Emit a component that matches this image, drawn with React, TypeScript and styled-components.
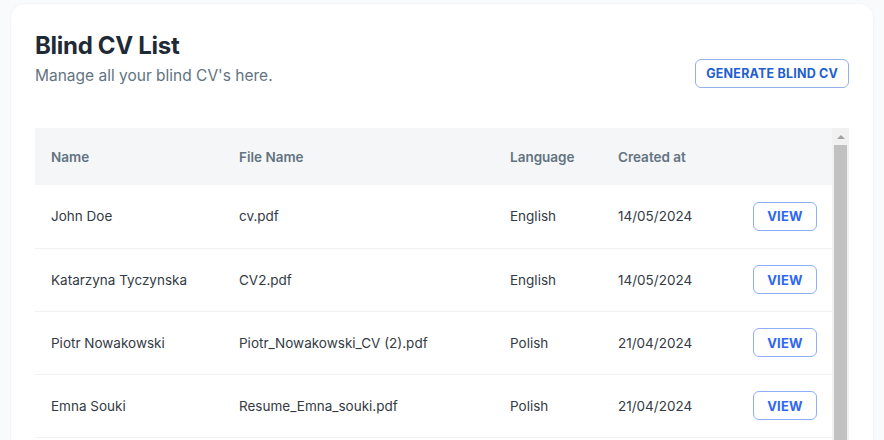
import React from "react";
import styled, { createGlobalStyle } from "styled-components";

const GlobalStyle = createGlobalStyle`
  * { box-sizing: border-box; }
  body {
    margin: 0;
    background: #f9fafb;
    font-family: "Inter", "Noto Sans", "Liberation Sans", sans-serif;
    color: #1f2a37;
  }
`;

const Page = styled.div`
  padding: 4px 11px 0;
`;

const Card = styled.section`
  background: #ffffff;
  border-radius: 14px;
  box-shadow: 0 0 2px rgba(145, 158, 171, 0.18);
  padding: 24px 24px 24px;
`;

const Header = styled.header`
  display: flex;
  justify-content: space-between;
  align-items: flex-end;
`;

const Title = styled.h1`
  margin: 0;
  font-size: 24px;
  line-height: 36px;
  font-weight: 700;
  color: #1f2a37;
  letter-spacing: -0.3px;
`;

const Subtitle = styled.p`
  margin: 0;
  font-size: 15.5px;
  line-height: 24px;
  color: #637381;
`;

const OutlineButton = styled.button<{ $tone?: "dark" | "bright" }>`
  font-family: inherit;
  background: #ffffff;
  border: 1px solid ${(p) => (p.$tone === "bright" ? "#8eaefc" : "#92b1ec")};
  border-radius: 6px;
  color: ${(p) => (p.$tone === "bright" ? "#2f66f6" : "#1f5fcf")};
  font-weight: 700;
  font-size: 12.5px;
  letter-spacing: 0.2px;
  height: 29px;
  padding: 0 10px;
  cursor: pointer;
`;

const ViewButton = styled(OutlineButton)`
  width: 64px;
  padding: 0;
  font-size: 13px;
`;

const TableFrame = styled.div`
  margin-top: 40px;
  height: 330px;
  display: flex;
  overflow: hidden;
`;

const TableArea = styled.div`
  flex: 1;
  min-width: 0;
`;

// stand-in for the browser's classic scrollbar
const ScrollTrack = styled.div`
  width: 17px;
  flex: none;
  background: #f1f1f1;
  display: flex;
  flex-direction: column;
`;

const ScrollArrow = styled.div`
  height: 17px;
  display: flex;
  align-items: center;
  justify-content: center;

  &::before {
    content: "";
    border-left: 4px solid transparent;
    border-right: 4px solid transparent;
    border-bottom: 4px solid #a3a3a3;
  }
`;

const ScrollThumb = styled.div`
  flex: 1;
  margin: 0 2px;
  background: #c1c1c1;
`;

const Table = styled.table`
  width: 100%;
  border-collapse: collapse;
  table-layout: fixed;
`;

const HeadCell = styled.th<{ $w: number }>`
  width: ${(p) => p.$w}px;
  height: 57px;
  padding: 0 16px;
  background: #f4f6f8;
  text-align: left;
  font-size: 13.5px;
  font-weight: 600;
  color: #637381;
`;

const Row = styled.tr`
  border-bottom: 1px solid #f0f1f3;
`;

const Cell = styled.td`
  height: 63px;
  padding: 0 16px;
  font-size: 13.5px;
  color: #333a44;
  white-space: nowrap;
`;

const columns = [
  { label: "Name", w: 188 },
  { label: "File Name", w: 271 },
  { label: "Language", w: 108 },
  { label: "Created at", w: 135 },
  { label: "", w: 96 },
];

const cvs = [
  { name: "John Doe", file: "cv.pdf", lang: "English", date: "14/05/2024" },
  { name: "Katarzyna Tyczynska", file: "CV2.pdf", lang: "English", date: "14/05/2024" },
  { name: "Piotr Nowakowski", file: "Piotr_Nowakowski_CV (2).pdf", lang: "Polish", date: "21/04/2024" },
  { name: "Emna Souki", file: "Resume_Emna_souki.pdf", lang: "Polish", date: "21/04/2024" },
];

export default function App() {
  return (
    <>
      <GlobalStyle />
      <Page>
        <Card>
          <Header>
            <div>
              <Title>Blind CV List</Title>
              <Subtitle>Manage all your blind CV's here.</Subtitle>
            </div>
            <OutlineButton>GENERATE BLIND CV</OutlineButton>
          </Header>
          <TableFrame>
            <TableArea>
              <Table>
                <thead>
                  <tr>
                    {columns.map((c) => (
                      <HeadCell key={c.w} $w={c.w}>
                        {c.label}
                      </HeadCell>
                    ))}
                  </tr>
                </thead>
                <tbody>
                  {cvs.map((cv) => (
                    <Row key={cv.name}>
                      <Cell>{cv.name}</Cell>
                      <Cell>{cv.file}</Cell>
                      <Cell>{cv.lang}</Cell>
                      <Cell>{cv.date}</Cell>
                      <Cell>
                        <ViewButton $tone="bright">VIEW</ViewButton>
                      </Cell>
                    </Row>
                  ))}
                </tbody>
              </Table>
            </TableArea>
            <ScrollTrack>
              <ScrollArrow />
              <ScrollThumb />
            </ScrollTrack>
          </TableFrame>
        </Card>
      </Page>
    </>
  );
}
